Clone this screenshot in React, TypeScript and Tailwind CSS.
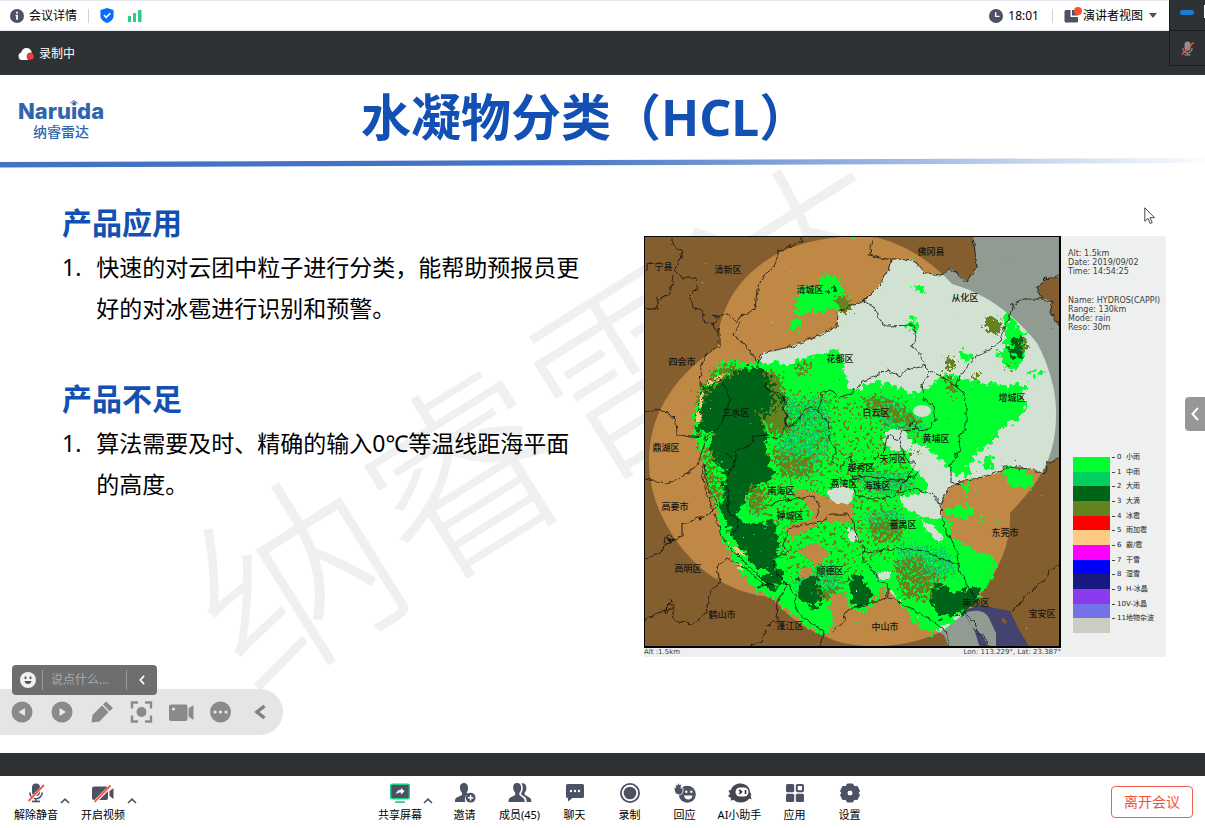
import type { ReactNode } from "react";

const ui = "font-['Noto_Sans','Noto_Sans_CJK_SC',sans-serif]";

/* ---------- radar map data ---------- */

const cities: [string, number, number][] = [
  ["广宁县", 659, 269], ["清新区", 728, 272], ["佛冈县", 931, 254], ["清城区", 810, 292],
  ["从化区", 965, 300], ["四会市", 682, 364], ["花都区", 840, 361], ["增城区", 1012, 400],
  ["三水区", 736, 415], ["白云区", 876, 415], ["鼎湖区", 666, 450], ["黄埔区", 936, 441],
  ["天河区", 893, 461], ["越秀区", 861, 470], ["荔湾区", 844, 486], ["海珠区", 877, 488],
  ["南海区", 781, 493], ["高要市", 675, 509], ["禅城区", 790, 518], ["番禺区", 903, 527],
  ["东莞市", 1005, 535], ["高明区", 688, 571], ["顺德区", 830, 573], ["南沙区", 976, 605],
  ["鹤山市", 722, 617], ["蓬江区", 790, 628], ["中山市", 885, 629], ["宝安区", 1042, 616],
];

const landPale =
  "893,259 913,260 925,273 942,275 950,268 967,282 977,267 973,238 973,230 1070,230 1070,275 1058,277 1048,278 1037,287 1040,297 1052,302 1050,313 1060,327 1070,327 1070,457 1060,457 1048,463 1043,473 1030,469 1007,467 997,473 983,477 965,480 950,487 941,503 942,520 950,537 957,553 958,567 968,585 978,600 963,612 985,630 995,650 950,650 944,635 925,625 905,607 888,590 878,578 866,567 852,545 850,530 853,515 835,500 800,480 787,423 785,397 765,388 767,373 757,362 762,353 790,347 813,338 837,327 837,312 865,300 878,287 887,272";

const coverage =
  "M718 347 C717 335 720 320 728 303 C740 280 757 265 780 252 C807 240 840 235 870 236 C905 243 932 262 952 284 C983 293 1010 310 1037 343 C1050 367 1057 395 1056 415 C1056 455 1042 480 1010 513 C1011 535 1005 555 992 577 C978 600 960 620 940 632 C905 650 850 650 827 637 C800 627 785 613 772 597 C750 596 727 587 707 573 C675 548 649 505 649 462 C649 420 668 380 718 347 Z";

const borders = [
  "672,237 672,245 683,251 678,262 675,270 683,278 697,278 698,287 689,296 692,306 703,312 703,320 712,324 720,318 712,316 728,314 737,322 740,317 747,313 755,310 757,290 764,275 773,268 778,258 778,252 790,246 802,241 800,237",
  "644,309 657,309 657,300 670,294 673,275",
  "712,324 719,330 719,347 706,354 701,368 700,386 709,388 708,381 720,378 727,392 730,400 723,420 715,432 706,436 701,455 698,465 680,478 666,484 645,479",
  "741,322 733,334 745,345 757,360 757,368 767,373 765,388 774,392 783,396 785,412 787,428 798,421 804,411 812,407 820,412 827,423 830,440 836,449 831,463 842,466 850,456 853,478 860,480",
  "757,362 762,353 790,347 813,338 837,327 838,312 853,304 865,300 878,287 887,272 893,259 913,260 925,273 942,275 950,268 967,282 977,267 973,237",
  "874,237 868,255 886,259 893,259",
  "862,300 875,308 879,320 887,326 912,325 915,337 913,347 922,357 925,366 930,371 945,378 955,386 965,394 966,407 966,429 959,435 960,450 951,462 951,482 960,485",
  "925,366 906,370 900,377 888,369 872,378 862,381 851,394 840,397 832,391 822,392 820,402 819,413 812,407",
  "955,386 962,372 976,356 988,350 1000,341 1003,330 1009,318 1013,304 1024,299 1043,299 1052,302 1050,313 1060,327",
  "1060,275 1045,279 1037,287 1040,297",
  "930,371 922,384 924,400 934,406 936,420 928,430 915,429 903,431 899,440 888,434 884,450 870,464 857,468",
  "901,440 903,455 915,465 906,481 892,497 873,499 855,494 852,476 878,478 906,481 920,470",
  "898,493 915,489 930,493 941,503 942,520 957,553 958,567 970,590 978,600",
  "941,503 950,487 965,480 983,477 1007,467 1030,469 1043,473 1048,463 1060,457",
  "645,560 660,552 672,540 682,536 682,524 698,518 713,511 718,505 708,488 704,465",
  "645,619 656,614 666,610 668,603 674,606 671,617 678,622 692,624 706,614 709,594 720,582 717,568 727,557 738,564 750,571 762,584 775,586 787,583 795,595 797,612 809,622 824,631 821,647",
  "644,412 655,410 668,412 676,420 677,434 690,437 703,436",
  "748,647 762,641 767,626 777,620 778,602 787,583 775,571 775,558 787,552 783,545 789,528 806,524 822,522 831,514 847,514 854,522 856,540 865,548 862,561 873,570 878,582 887,584 889,595 906,607 930,619 945,631 949,647",
  "727,453 735,462 727,476 728,495 728,512 739,520 736,531 726,532",
  "735,463 737,450 752,444 753,436 770,435 777,440 785,430 787,415",
  "765,506 786,500 802,498 813,496 820,507 817,517",
  "702,464 704,485 711,505 718,525 727,545 740,558 755,572 768,584",
  "862,552 878,551 900,548 925,551 945,560 958,565",
  "833,631 842,624 848,609 870,604 887,598 887,588",
  "1012,612 1028,594 1034,588 1046,579 1048,571 1060,564",
  "963,612 974,620 978,632 986,638 989,647",
];

const rainGreen = [
  "787,365 807,357 840,347 846,373 860,383 890,382 913,395 930,385 947,372 965,380 997,383 1013,390 1027,403 1023,417 997,430 993,443 973,457 963,477 953,473 930,450 907,440 913,463 928,480 925,495 907,495 902,503 930,518 950,515 952,537 960,543 993,557 997,567 980,597 953,620 930,635 913,620 900,600 885,585 872,603 863,616 850,606 840,592 833,600 836,620 830,633 817,633 797,620 780,603 757,590 740,573 720,533 717,507 707,483 701,453 694,440 693,413 701,390 720,363 737,360 773,363",
  "818,270 824,276 838,276 842,288 848,300 842,314 834,306 826,308 820,316 812,310 796,312 791,304 800,298 793,288 806,286 820,290",
  "800,312 806,314 797,332 786,330",
  "1002,312 1012,314 1016,326 1028,335 1024,358 1014,372 1004,362 994,350 1008,346",
  "1006,362 1014,362 1012,374",
  "852,234 864,234 862,242 854,242",
];
const rainTeal = [
  "780,395 830,395 835,440 815,478 780,480 772,450",
  "865,395 900,395 935,430 900,440 870,420",
  "855,465 910,470 920,490 885,500 858,490",
  "745,495 765,490 762,520 745,515",
  "860,510 900,505 910,535 870,540",
  "785,580 830,560 850,580 835,600 800,600",
  "895,540 950,545 960,575 920,595 895,575",
];
const rainOlive = [
  "696,388 715,365 740,358 742,372 712,390 702,410 704,440 692,440",
  "758,365 783,370 788,395 785,430 772,430 768,390",
  "790,362 815,357 810,375 795,380",
  "765,445 815,455 820,480 780,482",
  "750,408 795,415 800,435 770,438",
  "858,395 880,392 925,418 920,430 890,425 865,410",
  "865,515 905,515 905,545 870,545",
  "936,372 950,370 962,395 950,402",
  "890,560 920,552 940,575 930,605 900,600",
  "696,440 715,450 728,510 708,500",
  "744,485 770,480 770,515 745,515",
  "810,590 835,580 845,595 825,607",
];
const rainDark = [
  "700,392 735,370 765,368 782,390 788,412 765,422 745,425 720,420 700,440 697,420",
  "718,420 750,418 770,432 765,450 768,458 775,478 750,492 735,515 740,522 778,522 776,568 755,570 735,540 720,510 726,470 708,455",
  "765,575 785,570 787,582 765,592 757,585",
  "800,575 822,580 823,605 805,608 797,592",
  "848,570 865,580 872,598 862,612 852,604",
  "926,592 942,582 952,594 978,584 980,600 955,617 936,616",
  "824,292 836,282 834,298",
  "1011,336 1024,338 1024,356 1010,362",
];
const bareLand = [
  "787,489 810,491 853,504 852,522 820,523 792,539 784,527 815,517 806,502",
  "795,549 817,543 831,553 817,566",
  "800,570 814,564 810,578 798,578",
  "830,595 846,592 848,612 838,625 830,615",
];
const bareCity = [
  "845,363 862,370 864,390 846,388",
  "826,492 840,484 855,490 852,503 833,503",
  "882,440 890,428 907,432 914,448 893,452",
  "908,455 935,455 942,484 928,482 912,468",
  "900,496 935,492 942,518 925,518 903,508",
  "918,520 932,524 945,538 938,542",
  "846,528 856,530 858,545 850,542",
  "878,572 892,572 890,580 878,580",
];

const legend: [string, string, string][] = [
  ["bg-[#00ff2f]", "0", "小雨"],
  ["bg-[#00d060]", "1", "中雨"],
  ["bg-[#006418]", "2", "大雨"],
  ["bg-[#64821e]", "3", "大滴"],
  ["bg-[#ff0000]", "4", "冰雹"],
  ["bg-[#ffcb82]", "5", "雨加雹"],
  ["bg-[#ff00ff]", "6", "霰/雹"],
  ["bg-[#0000ff]", "7", "干雪"],
  ["bg-[#181882]", "8", "湿雪"],
  ["bg-[#8c3aee]", "9", "H-冰晶"],
  ["bg-[#7373e6]", "10", "V-冰晶"],
  ["bg-[#cccdc2]", "11", "地物杂波"],
];

function Speckle({ id, color, freq, spread, seed }: { id: string; color: string; freq: number; spread: number; seed: number }) {
  return (
    <filter id={id} x="644" y="236" width="417" height="412" filterUnits="userSpaceOnUse" colorInterpolationFilters="sRGB">
      <feTurbulence type="fractalNoise" baseFrequency={freq} numOctaves={4} seed={seed} result="n" />
      <feGaussianBlur in="SourceAlpha" stdDeviation={spread} result="b" />
      <feComposite in="b" in2="n" operator="arithmetic" k1={0} k2={1} k3={1.2} k4={-1.08} result="m" />
      <feColorMatrix in="m" type="matrix" values="0 0 0 0 0  0 0 0 0 0  0 0 0 0 0  0 0 0 20 0" result="a" />
      <feFlood floodColor={color} />
      <feComposite in2="a" operator="in" />
    </filter>
  );
}

function Shapes({ list, filter, opacity = 1 }: { list: string[]; filter: string; opacity?: number }) {
  return (
    <g filter={`url(#${filter})`}>
      {list.map((p) => (
        <polygon key={p} points={p} fillOpacity={opacity} />
      ))}
    </g>
  );
}

function RadarMap() {
  return (
    <svg viewBox="644 236 417 412" className="block w-full" role="img" aria-label="HYDROS">
      <defs>
        <Speckle id="sGreen" color="#00ff2f" freq={0.2} spread={4} seed={3} />
        <Speckle id="sTeal" color="#12c463" freq={0.45} spread={5} seed={8} />
        <Speckle id="sOlive" color="#64821e" freq={0.3} spread={4} seed={5} />
        <Speckle id="sDark" color="#006418" freq={0.16} spread={5} seed={12} />
        <Speckle id="sLand" color="#c08845" freq={0.2} spread={2} seed={6} />
        <Speckle id="sPale" color="#d1e2d3" freq={0.2} spread={2} seed={9} />
        <Speckle id="sSand" color="#f0c878" freq={0.4} spread={1} seed={2} />
        <filter id="rough" x="644" y="236" width="417" height="412" filterUnits="userSpaceOnUse">
          <feTurbulence type="fractalNoise" baseFrequency="0.16" numOctaves={2} seed={4} />
          <feDisplacementMap in="SourceGraphic" scale={6} xChannelSelector="R" yChannelSelector="G" />
        </filter>
      </defs>
      <rect x="644" y="236" width="417" height="412" fill="#c08845" />
      <polygon points={landPale} fill="#d1e2d3" />
      <path d="M963 611 L980 605 L1010 611 L1018 628 L1030 648 L980 648 L975 632 Z" fill="#61619f" />
      <path d="M965 613 C975 609 985 610 989 618 L996 633 L996 648 L989 648 L983 636 L972 627 Z" fill="#d1e2d3" />
      <path d="M1002 617 L1007 621 L1006 624 L1002 622 Z" fill="#c08845" />
      <path d={`M644 236H1061V648H644Z ${coverage}`} fill="#000" fillOpacity="0.31" fillRule="evenodd" />

      <Shapes list={rainGreen} filter="sGreen" />
      <g filter="url(#sGreen)">
        <path d="M1000 465 L1028 470 L1037 490 L1008 485 Z M960 484 h16 v8 h-16z M945 506 h30 v11 h-30z M980 516 h8 v10 h-8z M982 456 h12 v14 h-12z M962 464 h10 v14 h-10z" />
        <path d="M913 285 h12 v8 h-12z M907 318 h11 v14 h-11z M1003 385 h24 v10 h-24z M1028 370 h16 v7 h-16z M960 350 h12 v12 h-12z" />
      </g>
      <Shapes list={rainTeal} filter="sTeal" opacity={0.56} />
      <g filter="url(#sOlive)" fillOpacity="0.36">
        <path d="M720 372 L830 390 L905 395 L930 430 L900 545 L960 570 L930 610 L880 560 L840 600 L790 580 L745 500 L720 530 L700 460 Z" />
      </g>
      <Shapes list={rainDark} filter="sDark" />
      <Shapes list={rainOlive} filter="sOlive" opacity={0.6} />
      <g filter="url(#sOlive)">
        <path d="M834 292 L844 294 L853 310 L846 316 L838 308 Z M984 314 L998 318 L1006 332 L994 335 L984 328 Z M1020 336 l8 2 -2 18 -6 0z M1003 362 h8 v10 h-6z M944 358 h12 v12 h-12z M972 370 h8 v12 h-8z" />
      </g>
      <Shapes list={bareLand} filter="sLand" />
      <Shapes list={bareCity} filter="sPale" />
      <ellipse cx="922" cy="411" rx="9" ry="6" fill="#d1e2d3" />
      <path
        filter="url(#sSand)"
        fillOpacity="0.8"
        d="M704 382 L722 373 L724 377 L708 387 Z M700 392 l4 0 -2 16 -4 2z M695 414 l5 -4 2 10 -6 6z M727 542 l12 6 8 8 -8 0z M734 560 l8 4 2 8 -6 -3z"
      />

      <g filter="url(#rough)" fill="none" stroke="#101010" strokeWidth="1" strokeOpacity="0.8">
        {borders.map((p) => (
          <polyline key={p} points={p} />
        ))}
        <path d="M664 538 l5 -3 4 4 -3 5 -5 -1z M667 604 l4 -4 3 5 -4 5 -4 2z M910 424 l6 -1 1 5 -6 2z" />
      </g>
      <path d="M666 538 l6 1 -2 4z M698 517 l4 1 -2 3z" fill="#141414" />
      <g className="font-['Noto_Sans_CJK_SC',sans-serif] text-[9px] font-medium" textAnchor="middle" fill="#151510">
        {cities.map(([name, x, y]) => (
          <text key={name} x={x} y={y + 1}>
            {name}
          </text>
        ))}
      </g>
      <rect x="644.5" y="236.5" width="416" height="411" fill="none" stroke="#0a0a0a" />
      <path d="M644 647H1061 M1060 236V648" stroke="#000" strokeWidth="2" />
    </svg>
  );
}

/* ---------- icons ---------- */

const ink = "#4c5163";

function Icon({ children, size = "size-5", box = "0 0 20 20" }: { children: ReactNode; size?: string; box?: string }) {
  return (
    <svg viewBox={box} className={`${size} shrink-0`} fill={ink} aria-hidden="true">
      {children}
    </svg>
  );
}

const Caret = ({ label }: { label: string }) => (
  <button aria-label={label} className="flex h-5 w-3 items-center justify-center self-start pt-4">
    <svg viewBox="0 0 10 6" className="h-[6px] w-[10px]" fill="none" stroke={ink} strokeWidth="1.6">
      <path d="M1 5 5 1.2 9 5" />
    </svg>
  </button>
);

const Mic = ({ color = ink }: { color?: string }) => (
  <>
    <rect x="6" y="0.5" width="8" height="12.5" rx="4" fill={color} />
    <path d="M3.8 9.5a6.2 6.2 0 0 0 12.4 0M10 15.6V18" fill="none" stroke={color} strokeWidth="1.6" />
    <rect x="6" y="17.6" width="8" height="1.7" fill={color} />
    <path d="M3 18.2 18 2.2" stroke="#fff" strokeWidth="3" strokeOpacity={color === ink ? 1 : 0} />
    <path d="M2.5 18 18 2" stroke="#fa5240" strokeWidth="1.8" />
  </>
);

const icons: Record<string, ReactNode> = {
  mic: <Mic />,
  video: (
    <>
      <rect x="-1" y="3.500" width="16" height="13.500" rx="2" />
      <path d="M16.500 8 20.500 5v11l-4-3z" />
      <path d="M1.700 19 17.700 3" stroke="#fff" strokeWidth="3.200" />
      <path d="M1.500 18.800 17.500 2.500" stroke="#fa5240" strokeWidth="1.800" />
    </>
  ),
  share: (
    <>
      <rect x="0.700" y="1.200" width="18.600" height="14.600" rx="1.500" stroke="#1fd08a" strokeWidth="1.400" />
      <path d="M6 11.500c.4-3 2-4.600 5-4.700V4.900l3.500 3.300L11 11.500v-2c-2.200-.1-3.700.5-5 2z" fill="#fff" />
      <rect x="5" y="18.300" width="10" height="1.700" rx=".8" fill="#1fd08a" />
    </>
  ),
  invite: (
    <>
      <path d="M9 0C6 0 4.800 2.200 5 5c.2 2 .8 3.600 2 4.800V12L1.300 14.800C.3 15.400-.2 17.200 0 19h10.500a6.300 6.300 0 0 1 2.700-8.400c-.8-.4-1.400-.7-1.700-.8C12.700 8.500 13 7 13 5c.1-3-1.200-5-4-5z" />
      <circle cx="15.600" cy="14.700" r="4.900" />
      <path d="M15.600 12v5.400M12.900 14.700h5.400" stroke="#fff" strokeWidth="1.500" />
    </>
  ),
  members: (
    <>
      <path d="M7 0C4 0 3 2.200 3.200 5c.2 2 .8 3.600 2 4.800V12L0 14.800c-1.200.8-1.700 2.600-1.500 4.200h16.200c.2-1.600-.5-3.400-1.500-4L9.400 12V9.800C10.600 8.500 11.200 7 11.200 5 11.300 2 10 0 7 0z" />
      <path d="M11.300.4c2.800-.7 5.300 1.300 5.100 4.600-.1 2-.6 3.500-1.700 4.600v2.200l5 3c1.200.8 1.800 2.600 1.600 4.200h-4.600c0-2.800-.7-4.300-2.200-5.200L11.200 11.500v-1.300C12.300 8.700 12.800 7 12.800 5c0-1.800-.5-3.400-1.500-4.600z" />
    </>
  ),
  chat: (
    <>
      <path d="M2.500 1h15A1.500 1.500 0 0 1 19 2.500v11a1.500 1.500 0 0 1-1.500 1.500H7.500L3 18.500V15h-.5A1.500 1.500 0 0 1 1 13.500v-11A1.500 1.500 0 0 1 2.500 1z" />
      <g fill="#fff">
        <circle cx="6" cy="8" r="1.200" />
        <circle cx="10" cy="8" r="1.200" />
        <circle cx="14" cy="8" r="1.200" />
      </g>
    </>
  ),
  record: (
    <>
      <circle cx="10" cy="10" r="9.100" fill="none" stroke={ink} strokeWidth="1.800" />
      <circle cx="10" cy="10" r="6.300" />
    </>
  ),
  react: (
    <>
      <circle cx="12.300" cy="11.300" r="8.500" />
      <path
        d="M-.8 5.500C-1 4.400.2 4 .7 5L.6 2.500C.6 1.300 2 1.200 2.300 2.300L2.600.9C2.800-.1 4.200-.1 4.300 1L4.500 2C4.700.7 6.200.8 6.200 2v3.500c.4-1 1.900-1.200 1.900.1 0 3.500-.7 6.200-3.900 6.200C.8 11.800-.5 9.500-.8 5.500z"
        stroke="#fff"
        strokeWidth=".8"
      />
      <circle cx="11.300" cy="8.800" r="1.200" fill="#fff" />
      <circle cx="16.300" cy="8.800" r="1.200" fill="#fff" />
      <path d="M9 12.600h8.500c-.4 2.700-2 4-4.200 4s-3.900-1.300-4.300-4z" fill="#fff" />
    </>
  ),
  ai: (
    <g fill="#45474f">
      <path d="M10.500.5c5.500 0 9.300 3.800 9.500 8.500l1.500 3-1 .5 1 4-2.200-1c-1.800 2.800-5 4-8.500 4-3 0-5.300-.8-7-2.500l-3.600.5 1.200-2L-2 13l2-2-1.500-3.500L1 7C2.200 3 5.800.5 10.500.5z" />
      <rect x="5.500" y="4.500" width="13" height="9" rx="4.500" fill="#fff" />
      <path d="M9 7 11.500 8.800 9.300 10.800M15.500 7v4" stroke="#333" strokeWidth="1.600" fill="none" />
    </g>
  ),
  apps: (
    <>
      <rect x="1" y="1" width="8.200" height="8.200" rx="1.500" />
      <rect x="1" y="10.800" width="8.200" height="8.200" rx="1.500" />
      <rect x="10.800" y="10.800" width="8.200" height="8.200" rx="1.500" />
      <rect x="11.800" y="2" width="6.200" height="6.200" rx=".8" fill="none" stroke={ink} strokeWidth="2" />
    </>
  ),
  settings: (
    <path
      fillRule="evenodd"
      stroke={ink}
      strokeWidth="1"
      strokeLinejoin="round"
      d="M7.300 1h5.400l1.300 2.600 3.300-.1 2.200 4.600-1.500 1.900 1.500 1.900-2.200 4.600-3.300-.1-1.300 2.600H7.300L6 16.400l-3.300.1L.5 11.900 2 10 .5 8.100l2.200-4.600 3.300.1zM10 7a3 3 0 1 0 0 6 3 3 0 0 0 0-6z"
    />
  ),
};

function Tool({ icon, label, width = "w-[55px]" }: { icon: string; label: string; width?: string }) {
  return (
    <button className={`flex ${width} flex-col items-center gap-1 whitespace-nowrap text-[11px] leading-4 text-black`}>
      <svg viewBox="0 0 20 20" className="size-5 overflow-visible" fill={ink} aria-hidden="true">
        {icons[icon]}
      </svg>
      {label}
    </button>
  );
}

/* ---------- page parts ---------- */

function TopBar() {
  return (
    <header className="flex h-[31px] shrink-0 items-center border-y border-[#e6e7ee] bg-white pl-[10px] pr-12 text-xs text-black">
      <button className="flex items-center gap-[5px]">
        <Icon size="size-[14px]">
          <circle cx="10" cy="10" r="10" />
          <path d="M8.700 4h2.600v2.600H8.700zM8 8.300h3.300v7.200H8.700v-5.200H8z" fill="#fff" />
        </Icon>
        会议详情
      </button>
      <span className="ml-[11px] h-[14px] w-px bg-[#d4d5da]" />
      <svg viewBox="0 0 14 16" className="ml-[11px] h-[15px] w-[14px]" aria-hidden="true">
        <path d="M7 0l7 2v6.500c0 3.500-3 6-7 7.500-4-1.500-7-4-7-7.500V2z" fill="#0a6cff" />
        <path d="M3.800 7.500 6.200 9.900 10.500 5.600" fill="none" stroke="#fff" strokeWidth="1.800" />
      </svg>
      <svg viewBox="0 0 14 12" className="ml-[14px] h-3 w-[14px]" fill="#2acb8d" aria-hidden="true">
        <rect x="0" y="6" width="3" height="6" rx=".5" />
        <rect x="5" y="3" width="3" height="9" rx=".5" />
        <rect x="10" y="0" width="3.500" height="12" rx=".5" />
      </svg>
      <div className="ml-auto flex items-center">
        <Icon size="size-[14px]">
          <circle cx="10" cy="10" r="10" />
          <path d="M9.500 4.500v6h5.500" fill="none" stroke="#fff" strokeWidth="2" />
        </Icon>
        <time className="ml-[5px]">18:01</time>
        <span className="ml-[13px] h-[14px] w-px bg-[#d4d5da]" />
        <button className="ml-[11px] flex items-center">
          <svg viewBox="0 0 18 16" className="mb-[2px] h-4 w-[18px]" fill={ink} aria-hidden="true">
            <path d="M2 3h4.500v7H14v4a1.500 1.500 0 0 1-1.500 1.500H2A1.500 1.500 0 0 1 .5 14V4.500A1.500 1.500 0 0 1 2 3z" />
            <path d="M8 3h3v3.500h3v2H8z" />
            <circle cx="14" cy="4" r="4" fill="#fb5038" />
          </svg>
          <span className="ml-px">演讲者视图</span>
          <svg viewBox="0 0 8 5" className="ml-[6px] h-[5px] w-2" fill={ink} aria-hidden="true">
            <path d="M0 0h8L4 5z" />
          </svg>
        </button>
      </div>
    </header>
  );
}

function CornerPanel() {
  return (
    <aside className="absolute right-0 top-0 w-9 border-b border-l border-[#191b1c] bg-[#2e3235]">
      <div className="flex h-[31px] justify-between border-b border-[#191b1c] pl-[10px]">
        <span className="mt-[10px] h-[5px] w-[14px] rounded-sm bg-[#1c7ad8]" />
        <span className="mt-[5px] h-[13px] w-px bg-white" />
      </div>
      <div className="flex h-[34px] items-center pl-[10px]">
        <svg viewBox="0 0 20 20" className="size-[15px]" aria-hidden="true">
          <Mic color="#8f9294" />
        </svg>
      </div>
    </aside>
  );
}

const h2 = "text-[30px] leading-10 font-bold text-[#1250b4]";
const item = "mt-1 flex gap-[15px] text-[23px] leading-[41px] text-black";

function SlideText() {
  return (
    <div className="min-w-0 flex-1 pl-[62px] pr-16 pt-[35px]">
      <h2 className={h2}>产品应用</h2>
      <div className={item}>
        <span>1.</span>
        <p className="whitespace-nowrap">
          快速的对云团中粒子进行分类，能帮助预报员更
          <br />
          好的对冰雹进行识别和预警。
        </p>
      </div>
      <h2 className={`${h2} mt-[50px]`}>产品不足</h2>
      <div className={item}>
        <span>1.</span>
        <p className="whitespace-nowrap">
          算法需要及时、精确的输入0℃等温线距海平面
          <br />
          的高度。
        </p>
      </div>
    </div>
  );
}

function RadarFigure() {
  return (
    <figure className="mr-[39px] mt-[68px] flex w-[522px] shrink-0 self-start bg-[#eef0f0] font-['DejaVu_Sans','Noto_Sans_CJK_SC',sans-serif] text-[8px] leading-[9px] text-[#3c3c3c]">
      <div className="w-[417px]">
        <RadarMap />
        <div className="flex justify-between text-[7px]">
          <span>Alt :1.5km</span>
          <span>Lon: 113.229°, Lat: 23.387°</span>
        </div>
      </div>
      <figcaption className="flex flex-1 flex-col whitespace-nowrap pl-[7px] pt-[13px]">
        <p>Alt: 1.5km</p>
        <p>Date: 2019/09/02</p>
        <p>Time: 14:54:25</p>
        <p className="mt-5">Name: HYDROS(CAPPI)</p>
        <p>Range: 130km</p>
        <p>Mode: rain</p>
        <p>Reso: 30m</p>
        <div className="mb-6 ml-[5px] mt-auto flex h-[176px] text-[7px] text-[#222]">
          <div className="flex w-[37px] flex-col">
            {legend.map(([c, n]) => (
              <div key={n} className={`flex-1 ${c}`} />
            ))}
          </div>
          <ul className="-mt-[7px] mb-[7px] flex flex-col">
            {legend.map(([, n, t]) => (
              <li key={n} className="flex flex-1 items-center">
                <span className="mx-[2px] h-px w-[3px] bg-[#444]" />
                <span className="w-[9px]">{n}</span>
                <span>{t}</span>
              </li>
            ))}
          </ul>
        </div>
      </figcaption>
    </figure>
  );
}

function ChatPill() {
  return (
    <div className="absolute bottom-[58px] left-3 flex h-[30px] w-[145px] items-center rounded bg-[#6d6e70] pl-2">
      <button aria-label="表情">
        <svg viewBox="0 0 16 16" className="size-4" aria-hidden="true">
          <circle cx="8" cy="8" r="8" fill="#f0f0f0" />
          <rect x="4.600" y="4.500" width="1.800" height="2.600" fill="#555" />
          <rect x="9.600" y="4.500" width="1.800" height="2.600" fill="#555" />
          <path d="M4.500 9h7c-.2 2-1.600 3-3.500 3s-3.300-1-3.500-3z" fill="#555" />
        </svg>
      </button>
      <span className="ml-[6px] h-5 w-px bg-[#98999b]" />
      <input
        aria-label="说点什么"
        placeholder="说点什么..."
        className="ml-2 w-[75px] bg-transparent text-xs text-white outline-none placeholder:text-[#a9aaab]"
      />
      <span className="h-5 w-px bg-[#98999b]" />
      <button aria-label="收起" className="flex flex-1 justify-center">
        <svg viewBox="0 0 7 12" className="h-[10px] w-[6px]" fill="none" stroke="#fff" strokeWidth="2" aria-hidden="true">
          <path d="M6 1 1.500 6 6 11" />
        </svg>
      </button>
    </div>
  );
}

const showTools: [string, ReactNode][] = [
  ["上一页", <><circle cx="11" cy="11" r="10.500" /><path d="M14 7v8l-6.500-4z" fill="#e8e8e8" /></>],
  ["下一页", <><circle cx="11" cy="11" r="10.500" /><path d="M8.500 7v8l6.500-4z" fill="#e8e8e8" /></>],
  ["画笔", <><path d="M.5 21.500 1.500 14 11 4.500l6.500 6.500L8.500 20.500z" /><path d="M12 3.600 15 .5l7 6.500-3.500 3.200z" /></>],
  ["聚焦", <><circle cx="10.500" cy="11" r="5" /><path d="M1 7.500v-6h6M14 1.500h6v6M20 14.500v6h-6M7 20.500H1v-6" fill="none" stroke="#8a8a8a" strokeWidth="2.400" /></>],
  ["摄像头", <><rect x="-2" y="3.500" width="18.500" height="16.500" rx="2" /><path d="M17.500 7.500 22.500 4v15l-5-3.500z" /><circle cx="2.500" cy="8" r="1.600" fill="#e8e8e8" /></>],
  ["更多", <><circle cx="9.500" cy="11" r="10.500" /><g fill="#e8e8e8"><circle cx="4" cy="11" r="1.600" /><circle cx="9.500" cy="11" r="1.600" /><circle cx="15" cy="11" r="1.600" /></g></>],
  ["折叠", <path d="M13.500 5 6 11l7.500 6" fill="none" stroke="#808080" strokeWidth="3.500" />],
];

function Slide() {
  return (
    <main className="relative flex flex-1 flex-col overflow-hidden bg-white">
      <svg viewBox="0 0 1205 678" className="pointer-events-none absolute left-0 top-0 w-full" aria-hidden="true">
        <text
          transform="translate(250 622) rotate(-32)"
          className="font-['Noto_Sans_CJK_SC',sans-serif] text-[200px] font-light"
          fill="#f0f0f0"
        >
          纳睿雷达
        </text>
      </svg>
      <div className="relative flex h-[83px] shrink-0 items-center">
        <div className="w-[122px] pt-[6px] text-center text-[#2f66ab]">
          <div className="relative font-['Inter',sans-serif] text-[22px] font-extrabold leading-[22px]">
            Naruida
            <svg viewBox="0 0 8 4" className="absolute left-[70px] top-0 h-1 w-2" fill="none" stroke="#2f66ab" aria-hidden="true">
              <path d="M.5 3.500Q4-2 7.500 3.500M2.500 4Q4 1.500 5.500 4" />
            </svg>
          </div>
          <div className="font-['Noto_Sans_CJK_SC',sans-serif] text-sm font-medium leading-[18px]">纳睿雷达</div>
        </div>
        <h1 className="flex-1 whitespace-nowrap pl-[239px] text-[50px] font-bold leading-[80px] text-[#1250b4]">水凝物分类（HCL）</h1>
      </div>
      <svg viewBox="0 0 1205 10" preserveAspectRatio="none" className="relative block h-[10px] w-full shrink-0" aria-hidden="true">
        <defs>
          <linearGradient id="rule">
            <stop offset=".45" stopColor="#4472c4" />
            <stop offset=".78" stopColor="#a9c0e6" />
            <stop offset="1" stopColor="#fafcff" />
          </linearGradient>
        </defs>
        <path d="M0 4 L1205 0 V5 L0 9.500 Z" fill="url(#rule)" />
      </svg>
      <div className="relative flex">
        <SlideText />
        <RadarFigure />
      </div>
      <nav className="absolute bottom-[18px] left-0 flex h-[46px] w-[283px] items-center gap-[18px] rounded-r-full bg-[#e5e5e5] pl-[11px]">
        {showTools.map(([name, art]) => (
          <button key={name} aria-label={name}>
            <svg viewBox="0 0 22 22" className="size-[22px] overflow-visible" fill="#8a8a8a" aria-hidden="true">
              {art}
            </svg>
          </button>
        ))}
      </nav>
      <ChatPill />
      <button aria-label="展开" className="absolute right-0 top-[322px] flex h-[34px] w-5 items-center justify-center rounded-l bg-[#979797]">
        <svg viewBox="0 0 8 14" className="h-[14px] w-2" fill="none" stroke="#fff" strokeWidth="2" aria-hidden="true">
          <path d="M7 1 1.500 7 7 13" />
        </svg>
      </button>
      <svg viewBox="0 0 12 18" className="absolute right-[49px] top-[132px] h-[18px] w-3" fill="#fff" stroke="#333" strokeWidth=".9" aria-hidden="true">
        <path d="M.8.8v13.500l3.200-3 2.200 5.200 2-.8L6 10.700h4.500z" />
      </svg>
    </main>
  );
}

function BottomBar() {
  return (
    <footer className="flex h-[52px] shrink-0 items-center justify-between bg-white px-3">
      <div className="flex w-[132px] gap-px pl-[2px] pt-[2px]">
        <Tool icon="mic" label="解除静音" width="w-11" />
        <Caret label="麦克风选项" />
        <div className="ml-[9px] flex gap-px">
          <Tool icon="video" label="开启视频" width="w-11" />
          <Caret label="视频选项" />
        </div>
      </div>
      <div className="flex pt-[2px]">
        <Tool icon="share" label="共享屏幕" width="w-11" />
        <Caret label="共享选项" />
        <div className="ml-[3px] flex">
          <Tool icon="invite" label="邀请" />
          <Tool icon="members" label="成员(45)" />
          <Tool icon="chat" label="聊天" />
          <Tool icon="record" label="录制" />
          <Tool icon="react" label="回应" />
          <Tool icon="ai" label="AI小助手" />
          <Tool icon="apps" label="应用" />
          <Tool icon="settings" label="设置" />
        </div>
      </div>
      <button className="h-8 w-[82px] rounded border border-[#f4604c] text-sm text-[#f2503c]">离开会议</button>
    </footer>
  );
}

export default function App() {
  return (
    <div className={`relative flex min-h-screen flex-col bg-[#2e3235] ${ui}`}>
      <TopBar />
      <div className="flex h-11 shrink-0 items-center gap-[5px] pl-[18px] pt-px text-xs text-white">
        <svg viewBox="0 0 16 12" className="h-3 w-4" aria-hidden="true">
          <path d="M4 12a3.800 3.800 0 0 1-.8-7.400C3.800 2 5.800 0 8.600 0c3 0 5 2 5.200 5L12 12z" fill="#fff" />
          <circle cx="12.600" cy="8.500" r="3.600" fill="#fb3b30" stroke="#2e3235" strokeWidth=".6" />
        </svg>
        录制中
      </div>
      <Slide />
      <div className="h-[23px] shrink-0" />
      <BottomBar />
      <CornerPanel />
    </div>
  );
}
